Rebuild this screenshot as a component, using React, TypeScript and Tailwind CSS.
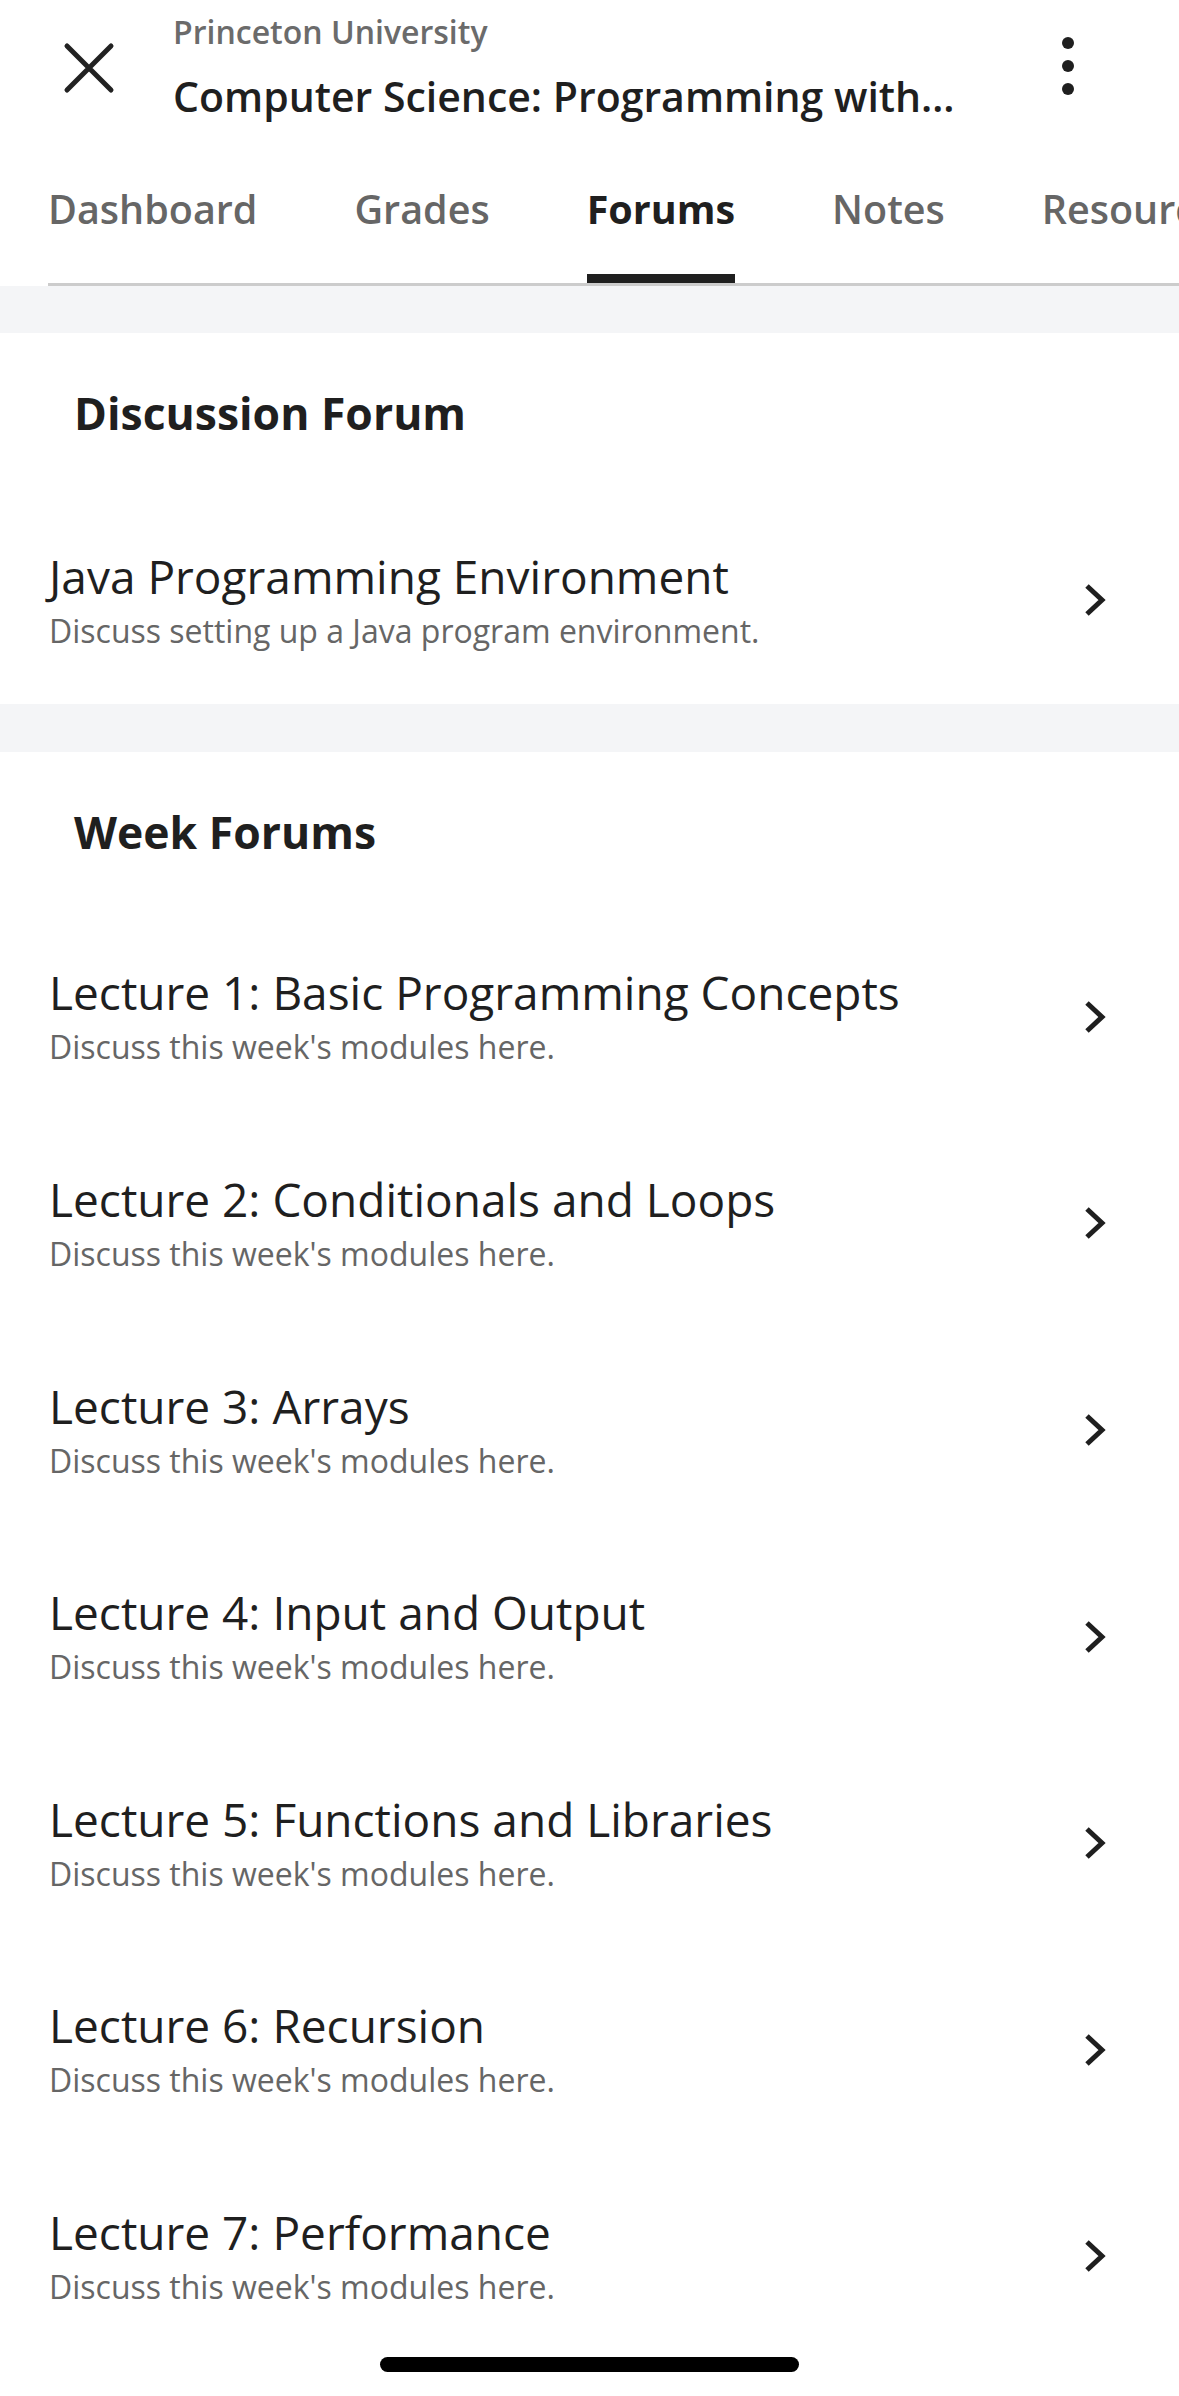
import React from "react";

const LECTURES = [
	"Lecture 1: Basic Programming Concepts",
	"Lecture 2: Conditionals and Loops",
	"Lecture 3: Arrays",
	"Lecture 4: Input and Output",
	"Lecture 5: Functions and Libraries",
	"Lecture 6: Recursion",
	"Lecture 7: Performance",
];

const TABS = ["Dashboard", "Grades", "Forums", "Notes", "Resources"];

function Chevron() {
	return (
		<svg width="24" height="34" viewBox="0 0 24 34" className="shrink-0">
			<path d="M5 3 L20 17 L5 31" fill="none" stroke="#1f1f1f" strokeWidth="5" />
		</svg>
	);
}

function ForumRow({ title, subtitle }: { title: string; subtitle: string }) {
	return (
		<div className="flex items-center justify-between pl-[49px] pr-[73px] py-[52.8px]">
			<div className="flex flex-col">
				<span className="text-[46px] leading-[52px] text-[#1f1f1f] whitespace-nowrap">{title}</span>
				<span className="mt-[9px] text-[32px] leading-[40px] text-[#666666] whitespace-nowrap">
					{subtitle}
				</span>
			</div>
			<Chevron />
		</div>
	);
}

function SectionTitle({ children }: { children: React.ReactNode }) {
	return (
		<h2 className="pt-[52px] pl-[74px] text-[44.5px] leading-[56px] font-bold text-[#1f1f1f]">
			{children}
		</h2>
	);
}

export default function App() {
	return (
		<div
			className="relative w-[1179px] h-[2396px] overflow-hidden bg-white"
			style={{ fontFamily: '"Open Sans", sans-serif' }}
		>
			{/* Header */}
			<div className="flex items-start pt-[12px] h-[183px]">
				<svg width="60" height="60" viewBox="0 0 60 60" className="ml-[59px] mt-[26px] shrink-0">
					<path d="M8 8 L52 52 M52 8 L8 52" stroke="#222" strokeWidth="5" strokeLinecap="round" />
				</svg>
				<div className="ml-[54px] flex flex-col">
					<span className="text-[32px] leading-[40px] font-semibold text-[#6b6b6b]">
						Princeton University
					</span>
					<span className="mt-[18px] text-[41px] leading-[52px] font-semibold text-[#1f1f1f] whitespace-nowrap">
						Computer Science: Programming with…
					</span>
				</div>
				<div className="ml-auto mr-[105px] mt-[25px] flex flex-col items-center gap-[11px]">
					<span className="w-[12px] h-[12px] rounded-full bg-[#1f1f1f]" />
					<span className="w-[12px] h-[12px] rounded-full bg-[#1f1f1f]" />
					<span className="w-[12px] h-[12px] rounded-full bg-[#1f1f1f]" />
				</div>
			</div>

			{/* Tabs */}
			<div className="ml-[48px] flex gap-[97px] border-b-[3px] border-[#cccccc] whitespace-nowrap">
				{TABS.map((tab) => {
					const active = tab === "Forums";
					return (
						<div key={tab} className="flex flex-col shrink-0">
							<span
								className={
									active
										? "text-[39.5px] leading-[52px] font-bold text-[#1f1f1f]"
										: "text-[39.5px] leading-[52px] font-semibold text-[#666666]"
								}
							>
								{tab}
							</span>
							<span
								className={
									active
										? "mt-[39px] h-[9px] bg-[#1f1f1f]"
										: "mt-[39px] h-[9px] bg-transparent"
								}
							/>
						</div>
					);
				})}
			</div>

			<div className="h-[47px] bg-[#f4f5f7]" />

			{/* Discussion forum */}
			<section>
				<SectionTitle>Discussion Forum</SectionTitle>
				<div className="mt-[56px]">
					<ForumRow
						title="Java Programming Environment"
						subtitle="Discuss setting up a Java program environment."
					/>
				</div>
			</section>

			<div className="h-[48px] bg-[#f4f5f7]" />

			{/* Week forums */}
			<section>
				<SectionTitle>Week Forums</SectionTitle>
				<div className="mt-[54px]">
					{LECTURES.map((l) => (
						<ForumRow key={l} title={l} subtitle="Discuss this week's modules here." />
					))}
				</div>
			</section>

			{/* Home indicator */}
			<div className="absolute left-[380px] bottom-[24px] w-[419px] h-[15px] rounded-full bg-black" />
		</div>
	);
}
